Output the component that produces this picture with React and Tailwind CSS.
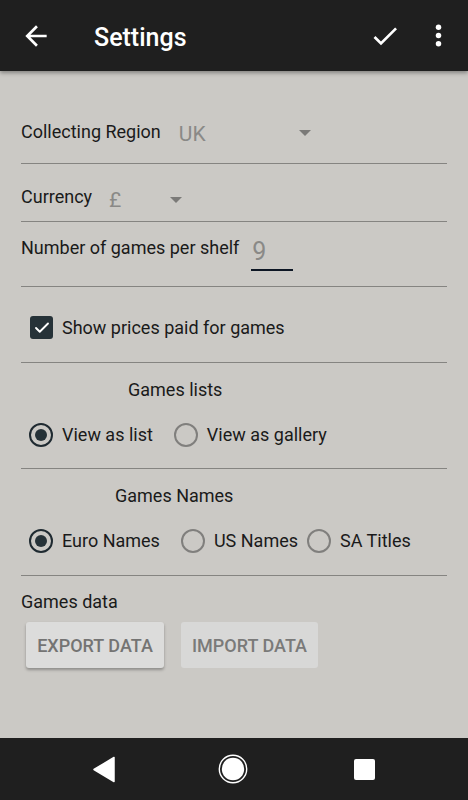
import { Check } from "lucide-react";

const font = { fontFamily: "Roboto, 'Noto Sans', sans-serif" };

const Divider = () => <div className="h-px w-full shrink-0 bg-[#858481]" />;

const Caret = () => (
    <svg width="12" height="6" viewBox="0 0 12 6">
        <path d="M0 0 L12 0 L6 6 Z" fill="#7b7a78" />
    </svg>
);

const Radio = ({ checked, label }) => (
    <div className="flex h-[24px] items-center gap-[9px]">
        <div
            className={
                "flex h-[24px] w-[24px] items-center justify-center rounded-full border-[2px] " +
                (checked ? "border-[#1f2a31]" : "border-[#807f7d]")
            }
        >
            {checked && <div className="h-[12px] w-[12px] rounded-full bg-[#263238]" />}
        </div>
        <span className="text-[18px] leading-[24px] text-[#1a1a1a]">{label}</span>
    </div>
);

const App = () => {
    return (
        <div className="flex h-[800px] w-[468px] flex-col bg-[#cbc9c5]" style={font}>
            <header className="relative z-10 flex h-[71px] shrink-0 items-center bg-[#1f1f1f] shadow-[0_2px_4px_rgba(0,0,0,0.35)]">
                <svg className="ml-[20px]" width="32" height="32" viewBox="0 0 24 24" fill="white">
                    <path d="M20 11H7.83l5.59-5.59L12 4l-8 8 8 8 1.41-1.41L7.83 13H20v-2z" />
                </svg>
                <h1 className="ml-[42px] mt-[3px] text-[25px] font-medium leading-none text-white">Settings</h1>
                <svg className="ml-auto" width="32" height="32" viewBox="0 0 24 24" fill="white">
                    <path d="M9 16.17L4.83 12l-1.42 1.41L9 19 21 7l-1.41-1.41z" />
                </svg>
                <svg className="ml-[21px] mr-[13px]" width="33" height="33" viewBox="0 0 24 24" fill="white">
                    <circle cx="12" cy="6" r="2" />
                    <circle cx="12" cy="12" r="2" />
                    <circle cx="12" cy="18" r="2" />
                </svg>
            </header>

            <main className="flex flex-1 flex-col px-[21px]">
                <div className="flex h-[92px] shrink-0 items-start pt-[49px]">
                    <span className="text-[18px] leading-[24px] text-[#1a1a1a]">Collecting Region</span>
                    <span className="ml-[18px] mt-[2px] text-[21px] leading-[24px] text-[#8a8987]">UK</span>
                    <div className="ml-[93px] mt-[10px] flex">
                        <Caret />
                    </div>
                </div>
                <Divider />

                <div className="flex h-[57px] shrink-0 items-start pt-[21px]">
                    <span className="text-[18px] leading-[24px] text-[#1a1a1a]">Currency</span>
                    <span className="ml-[17px] mt-[3px] text-[21px] leading-[24px] text-[#8a8987]">£</span>
                    <div className="ml-[49px] mt-[12px] flex">
                        <Caret />
                    </div>
                </div>
                <Divider />

                <div className="flex h-[64px] shrink-0 items-start pt-[14px]">
                    <span className="text-[18px] leading-[24px] text-[#1a1a1a]">Number of games per shelf</span>
                    <div className="ml-[12px] mt-[2px] flex w-[42px] flex-col">
                        <span className="pl-[1px] text-[25px] leading-[28px] text-[#8a8987]">9</span>
                        <div className="mt-[3px] h-[2px] w-full bg-[#0d1624]" />
                    </div>
                </div>
                <Divider />

                <div className="flex h-[75px] shrink-0 items-start gap-[9px] pl-[9px] pt-[29px]">
                    <div className="flex h-[23px] w-[23px] items-center justify-center rounded-[3px] bg-[#263238]">
                        <Check className="text-white" size={18} strokeWidth={2.5} />
                    </div>
                    <span className="text-[18px] leading-[24px] text-[#1a1a1a]">Show prices paid for games</span>
                </div>
                <Divider />

                <div className="flex h-[105px] shrink-0 flex-col">
                    <span className="ml-[107px] mt-[15px] text-[18px] leading-[24px] text-[#1a1a1a]">Games lists</span>
                    <div className="mt-[21px] flex gap-[21px] pl-[8px]">
                        <Radio checked label="View as list" />
                        <Radio label="View as gallery" />
                    </div>
                </div>
                <Divider />

                <div className="flex h-[106px] shrink-0 flex-col">
                    <span className="ml-[94px] mt-[15px] text-[18px] leading-[24px] text-[#1a1a1a]">Games Names</span>
                    <div className="mt-[21px] flex pl-[8px]">
                        <Radio checked label="Euro Names" />
                        <div className="ml-[21px]">
                            <Radio label="US Names" />
                        </div>
                        <div className="ml-[9px]">
                            <Radio label="SA Titles" />
                        </div>
                    </div>
                </div>
                <Divider />

                <span className="mt-[14px] text-[18px] leading-[24px] text-[#1a1a1a]">Games data</span>
                <div className="mt-[8px] flex gap-[17px] pl-[5px]">
                    <button className="h-[46px] w-[138px] rounded-[3px] bg-[#dcdcdb] text-[18px] font-medium text-[#747473] shadow-[0_2px_3px_rgba(0,0,0,0.3)]">
                        EXPORT DATA
                    </button>
                    <button className="h-[46px] w-[137px] rounded-[3px] bg-[#d8d8d7] text-[18px] font-medium text-[#7a7a79]">
                        IMPORT DATA
                    </button>
                </div>
            </main>

            <nav className="flex h-[62px] shrink-0 items-center bg-[#1f1f1f]">
                <svg className="ml-[92px]" width="24" height="27" viewBox="0 0 24 27">
                    <path d="M22 1.5 L22 25.5 L2 13.5 Z" fill="white" stroke="white" strokeWidth="1.5" strokeLinejoin="round" />
                </svg>
                <svg className="ml-[102px]" width="30" height="30" viewBox="0 0 30 30">
                    <circle cx="15" cy="15" r="13.7" fill="none" stroke="white" strokeWidth="1.4" />
                    <circle cx="15" cy="15" r="11.2" fill="white" />
                </svg>
                <div className="ml-[106px] h-[21px] w-[21px] rounded-[2px] bg-white" />
            </nav>
        </div>
    );
};

export default App;
